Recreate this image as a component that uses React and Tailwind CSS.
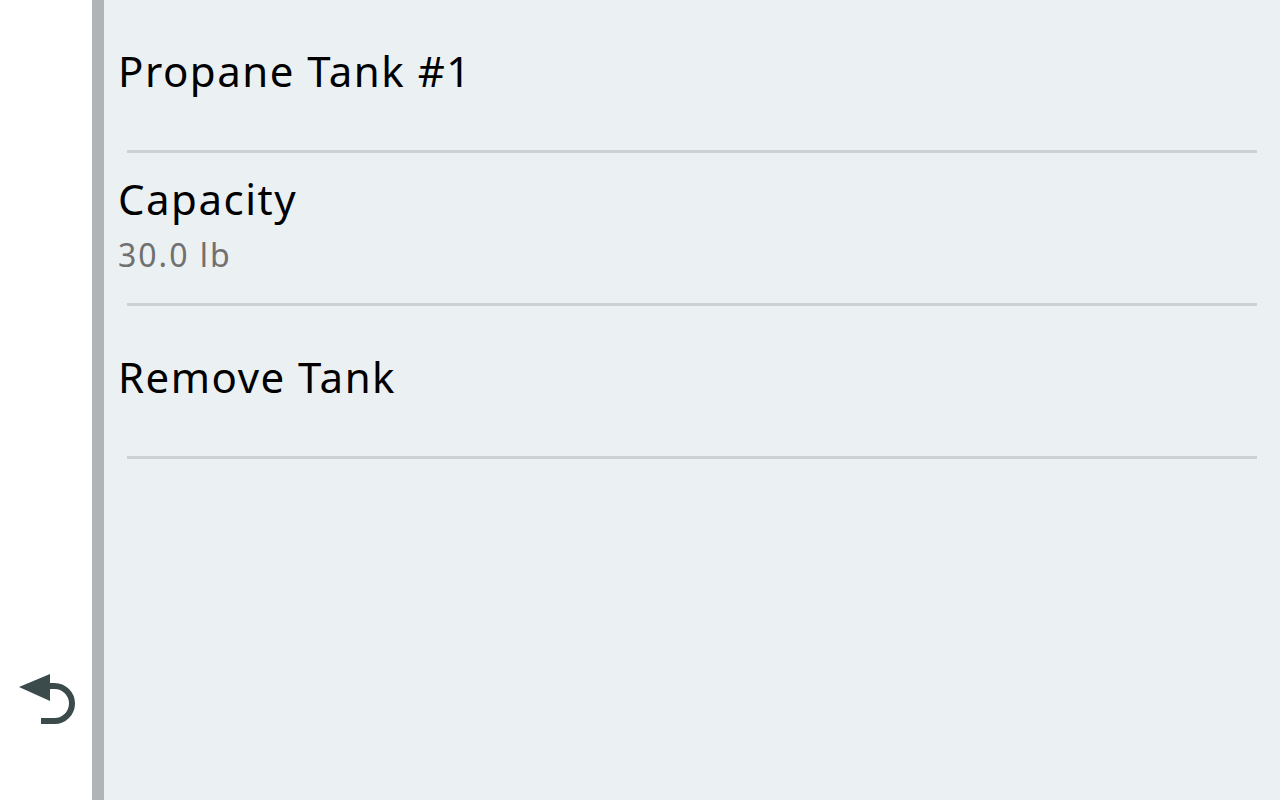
import React from "react";

const rows = [
  { title: "Propane Tank #1" },
  { title: "Capacity", sub: "30.0 lb" },
  { title: "Remove Tank" },
];

const BackIcon = () => (
  <svg width="64" height="64" viewBox="0 0 64 64" fill="none">
    <polygon points="5,21 36,8 36,35" fill="#3b4a4a" />
    <path
      d="M34 20 H40.5 A17.5 17.5 0 0 1 40.5 55 H27"
      stroke="#3b4a4a"
      strokeWidth="6"
      fill="none"
    />
  </svg>
);

export default function App() {
  return (
    <div
      className="flex h-[800px] w-[1280px] overflow-hidden bg-white"
      style={{ fontFamily: '"Noto Sans", sans-serif' }}
    >
      {/* Left rail with back button */}
      <div className="flex w-[92px] flex-col justify-end pb-[70px] pl-[14px]">
        <BackIcon />
      </div>
      <div className="w-[12px] bg-[#b0b4b7]"></div>

      {/* Menu list */}
      <div className="flex flex-1 flex-col bg-[#ebf0f3]">
        {rows.map((row) => (
          <div key={row.title} className="flex flex-col">
            <div className="flex h-[150px] flex-col justify-center pb-[8px] pl-[14px]">
              <div className="text-[42px] leading-[46px] tracking-[1.5px] text-black">
                {row.title}
              </div>
              {row.sub && (
                <div className="mt-[15px] text-[32px] leading-[36px] tracking-[2px] text-[#707070]">
                  {row.sub}
                </div>
              )}
            </div>
            <div className="ml-[23px] mr-[23px] h-[3px] bg-[#cdd1d4]"></div>
          </div>
        ))}
      </div>
    </div>
  );
}
